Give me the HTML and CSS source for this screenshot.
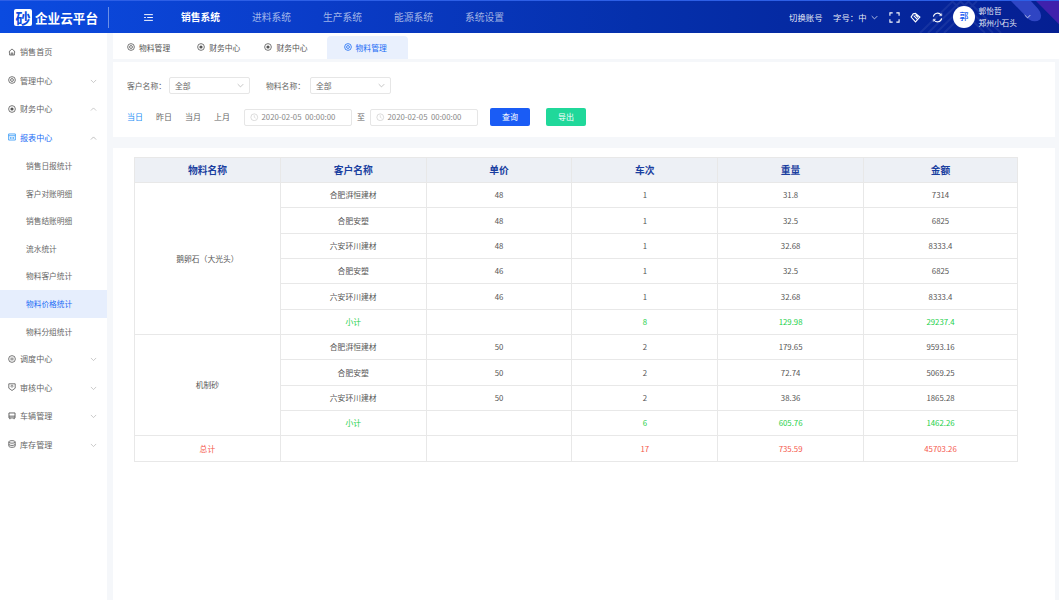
FILE: index.html
```html
<!DOCTYPE html>
<html lang="zh-CN">
<head>
<meta charset="utf-8">
<title>企业云平台</title>
<link rel="stylesheet" href="styles.css">
</head>
<body>
<header class="topbar">
  <svg class="deco" viewBox="0 0 1059 33" preserveAspectRatio="none" aria-hidden="true">
    <path d="M920 33L953 0M928 33L961 0M936 33L969 0M944 33L977 0M952 0L985 33M960 0L993 33M968 0L1001 33" stroke="#fff" stroke-opacity=".07" stroke-width="2" fill="none"/>
    <path d="M1011 0H1031L1038 8Q1043 14 1040 19Q1035 23 1029 19Z" fill="#3a4fd0" fill-opacity=".8"/>
    <path d="M1036 0H1059V24Z" fill="#4a22b0" fill-opacity=".85"/>
  </svg>
  <div class="brand">
    <span class="logo-mark">砂</span>
    <span class="logo-text">企业云平台</span>
  </div>
  <svg class="menu-toggle" viewBox="0 0 10 8" aria-hidden="true"><path d="M0 .7H10M3.5 4H10M0 7.3H10M0 4H2" stroke="#fff" stroke-width="1.1" fill="none"/></svg>
  <nav class="mainnav">
    <a class="on">销售系统</a><a>进料系统</a><a>生产系统</a><a>能源系统</a><a>系统设置</a>
  </nav>
  <div class="tools">
    <span class="tool-text">切换账号</span>
    <span class="tool-text size">字号：中
      <svg class="chev" viewBox="0 0 10 6"><path d="M1 1l4 4 4-4" stroke="#fff" fill="none"/></svg>
    </span>
    <svg class="tool-icon" viewBox="0 0 12 12"><path d="M1 4V1H4M8 1H11V4M11 8V11H8M4 11H1V8" stroke="#fff" stroke-width="1.2" fill="none"/></svg>
    <svg class="tool-icon" viewBox="0 0 12 12"><path d="M6 1.5L10.8 5.5 6 10.8 1.2 5.5 3.5 2ZM4 4L8 8M6 3L9 6" stroke="#fff" stroke-width="1.2" fill="none"/></svg>
    <svg class="tool-icon" viewBox="0 0 12 12"><path d="M1.5 5A4.6 4.6 0 0 1 10 3.5M10.5 7A4.6 4.6 0 0 1 2 8.5" stroke="#fff" stroke-width="1.2" fill="none"/><path d="M10.6 1.5V4H8M1.4 10.5V8H4" stroke="#fff" stroke-width=".8" fill="none"/></svg>
    <span class="avatar">郭</span>
    <span class="user"><span>郭怡哲</span><span>郑州小石头</span></span>
    <svg class="chev user-chev" viewBox="0 0 10 6"><path d="M1 1l4 4 4-4" stroke="#fff" fill="none"/></svg>
  </div>
</header>

<div class="shell">
  <aside class="sidebar">
    <a class="item">
      <svg class="ico" viewBox="0 0 10 10"><path d="M1 4.8L5 1.2 9 4.8M2 4.2V8.8H8V4.2M4 8.8V6.2H6V8.8" fill="none" stroke="currentColor"/></svg>销售首页
    </a>
    <a class="item">
      <svg class="ico" viewBox="0 0 10 10"><circle cx="5" cy="5" r="4.2" fill="none" stroke="currentColor"/><circle cx="5" cy="5" r="1.8" fill="none" stroke="currentColor"/></svg>管理中心
      <svg class="arrow" viewBox="0 0 8 5"><path d="M1 1l3 3 3-3" fill="none" stroke="currentColor" stroke-width=".7"/></svg>
    </a>
    <a class="item">
      <svg class="ico" viewBox="0 0 10 10"><circle cx="5" cy="5" r="4.2" fill="none" stroke="currentColor"/><circle cx="5" cy="5" r="2" fill="currentColor"/></svg>财务中心
      <svg class="arrow" viewBox="0 0 8 5"><path d="M1 4l3-3 3 3" fill="none" stroke="currentColor" stroke-width=".7"/></svg>
    </a>
    <a class="item active">
      <svg class="ico" viewBox="0 0 10 10"><path d="M.8 1.2H9.2V8.8H.8ZM.8 3.4H9.2M3 5V7.4M5 5V7.4M7 5V7.4" fill="none" stroke="currentColor" stroke-width=".9"/></svg>报表中心
      <svg class="arrow" viewBox="0 0 8 5"><path d="M1 4l3-3 3 3" fill="none" stroke="#999" stroke-width=".7"/></svg>
    </a>
    <a class="sub">销售日报统计</a>
    <a class="sub">客户对账明细</a>
    <a class="sub">销售结账明细</a>
    <a class="sub">流水统计</a>
    <a class="sub">物料客户统计</a>
    <a class="sub current">物料价格统计</a>
    <a class="sub">物料分组统计</a>
    <a class="item">
      <svg class="ico" viewBox="0 0 10 10"><circle cx="5" cy="5" r="4.2" fill="none" stroke="currentColor"/><path d="M3 4H7M3 6H7" stroke="currentColor"/></svg>调度中心
      <svg class="arrow" viewBox="0 0 8 5"><path d="M1 1l3 3 3-3" fill="none" stroke="currentColor" stroke-width=".7"/></svg>
    </a>
    <a class="item">
      <svg class="ico" viewBox="0 0 10 10"><path d="M1 1H9V6.5L5 9.4 1 6.5Z" fill="none" stroke="currentColor"/><circle cx="5" cy="4" r="1.3" fill="none" stroke="currentColor" stroke-width=".8"/></svg>审核中心
      <svg class="arrow" viewBox="0 0 8 5"><path d="M1 1l3 3 3-3" fill="none" stroke="currentColor" stroke-width=".7"/></svg>
    </a>
    <a class="item">
      <svg class="ico" viewBox="0 0 10 10"><path d="M1.2 1.2H8.8V7.4H1.2ZM1.2 5.2H8.8M2.4 7.4V9M7.6 7.4V9" fill="none" stroke="currentColor" stroke-width="1.1"/></svg>车辆管理
      <svg class="arrow" viewBox="0 0 8 5"><path d="M1 1l3 3 3-3" fill="none" stroke="currentColor" stroke-width=".7"/></svg>
    </a>
    <a class="item">
      <svg class="ico" viewBox="0 0 10 10"><ellipse cx="5" cy="2.4" rx="4" ry="1.6" fill="none" stroke="currentColor"/><path d="M1 2.4V7.6C1 8.5 2.8 9.2 5 9.2S9 8.5 9 7.6V2.4M1 5.2C1 6.1 2.8 6.8 5 6.8S9 6.1 9 5.2" fill="none" stroke="currentColor"/></svg>库存管理
      <svg class="arrow" viewBox="0 0 8 5"><path d="M1 1l3 3 3-3" fill="none" stroke="currentColor" stroke-width=".7"/></svg>
    </a>
  </aside>

  <main class="content">
    <div class="tabs">
      <a class="tab t1"><svg class="tab-ico" viewBox="0 0 10 10"><circle cx="5" cy="5" r="4.2" fill="none" stroke="currentColor"/><circle cx="5" cy="5" r="1.8" fill="none" stroke="currentColor"/></svg>物料管理</a>
      <a class="tab t2"><svg class="tab-ico" viewBox="0 0 10 10"><circle cx="5" cy="5" r="4.2" fill="none" stroke="currentColor"/><circle cx="5" cy="5" r="2" fill="currentColor"/></svg>财务中心</a>
      <a class="tab t3"><svg class="tab-ico" viewBox="0 0 10 10"><circle cx="5" cy="5" r="4.2" fill="none" stroke="currentColor"/><circle cx="5" cy="5" r="2" fill="currentColor"/></svg>财务中心</a>
      <a class="tab selected"><svg class="tab-ico" viewBox="0 0 10 10"><circle cx="5" cy="5" r="4.2" fill="none" stroke="currentColor"/><circle cx="5" cy="5" r="1.8" fill="none" stroke="currentColor"/></svg>物料管理</a>
    </div>

    <section class="filters">
      <div class="filter-row">
        <label class="flabel">客户名称：</label>
        <div class="select">全部<svg viewBox="0 0 10 6"><path d="M1 1l4 4 4-4" fill="none" stroke="#999" stroke-width=".8"/></svg></div>
        <label class="flabel second">物料名称：</label>
        <div class="select">全部<svg viewBox="0 0 10 6"><path d="M1 1l4 4 4-4" fill="none" stroke="#999" stroke-width=".8"/></svg></div>
      </div>
      <div class="filter-row lower">
        <a class="quick on">当日</a><a class="quick">昨日</a><a class="quick">当月</a><a class="quick">上月</a>
        <div class="date"><svg viewBox="0 0 10 10"><circle cx="5" cy="5" r="4" fill="none" stroke="#ccc" stroke-width=".8"/><path d="M5 2.6V5L6.6 6" fill="none" stroke="#ccc" stroke-width=".7"/></svg><span>2020-02-05&nbsp;&nbsp;00:00:00</span></div>
        <span class="to">至</span>
        <div class="date"><svg viewBox="0 0 10 10"><circle cx="5" cy="5" r="4" fill="none" stroke="#ccc" stroke-width=".8"/><path d="M5 2.6V5L6.6 6" fill="none" stroke="#ccc" stroke-width=".7"/></svg><span>2020-02-05&nbsp;&nbsp;00:00:00</span></div>
        <button class="btn query">查询</button>
        <button class="btn export">导出</button>
      </div>
    </section>

    <section class="panel">
      <table class="grid">
        <colgroup><col class="c1"><col class="c2"><col class="c3"><col class="c4"><col class="c5"><col class="c6"></colgroup>
        <thead><tr><th>物料名称</th><th>客户名称</th><th>单价</th><th>车次</th><th>重量</th><th>金额</th></tr></thead>
        <tbody>
          <tr><td rowspan="6">鹅卵石（大光头）</td><td>合肥湃恒建材</td><td>48</td><td>1</td><td>31.8</td><td>7314</td></tr>
          <tr><td>合肥安塑</td><td>48</td><td>1</td><td>32.5</td><td>6825</td></tr>
          <tr><td>六安环川建材</td><td>48</td><td>1</td><td>32.68</td><td>8333.4</td></tr>
          <tr><td>合肥安塑</td><td>46</td><td>1</td><td>32.5</td><td>6825</td></tr>
          <tr><td>六安环川建材</td><td>46</td><td>1</td><td>32.68</td><td>8333.4</td></tr>
          <tr class="subtotal"><td>小计</td><td></td><td>8</td><td>129.98</td><td>29237.4</td></tr>
          <tr><td rowspan="4">机制砂</td><td>合肥湃恒建材</td><td>50</td><td>2</td><td>179.65</td><td>9593.16</td></tr>
          <tr><td>合肥安塑</td><td>50</td><td>2</td><td>72.74</td><td>5069.25</td></tr>
          <tr><td>六安环川建材</td><td>50</td><td>2</td><td>38.36</td><td>1865.28</td></tr>
          <tr class="subtotal"><td>小计</td><td></td><td>6</td><td>605.76</td><td>1462.26</td></tr>
          <tr class="total"><td>总计</td><td></td><td></td><td>17</td><td>735.59</td><td>45703.26</td></tr>
        </tbody>
      </table>
    </section>
  </main>
</div>
</body>
</html>
```

FILE: styles.css
```css
* { box-sizing: border-box; }
html, body { margin: 0; height: 100%; overflow: hidden; }
body {
  font-family: "Noto Sans CJK SC", "Noto Sans", sans-serif;
  font-size: 8px;
  color: #555;
  background: #f5f7fa;
}
a { display: block; }

.topbar {
  position: relative;
  height: 33px;
  display: flex;
  align-items: center;
  color: #fff;
  background: linear-gradient(90deg, #0b4be0 0%, #0a3cc8 30%, #0530ac 60%, #051f92 100%);
  border-top: 1px solid #2d5fe6;
  overflow: hidden;
}
.deco { position: absolute; inset: 0; width: 100%; height: 100%; }
.brand {
  position: relative;
  width: 109px;
  height: 21px;
  display: flex;
  align-items: center;
  padding-left: 14px;
  border-right: 1px solid rgba(255,255,255,.4);
  flex: none;
}
.logo-mark {
  width: 18px; height: 17px;
  background: #fff; color: #0b4be0;
  border-radius: 2px;
  font-size: 15px; line-height: 17px; font-weight: 700;
  text-align: center;
  margin-right: 3px;
}
.logo-text { font-size: 12.6px; font-weight: 700; white-space: nowrap; }
.menu-toggle { position: relative; width: 9px; height: 7px; margin-left: 35px; flex: none; }
.mainnav {
  position: relative;
  display: flex;
  gap: 32px;
  margin-left: 28px;
  font-size: 9.75px;
  color: rgba(255,255,255,.62);
}
.mainnav a { white-space: nowrap; }
.mainnav .on { color: #fff; font-weight: 700; }
.tools {
  position: relative;
  margin-left: auto;
  display: flex;
  align-items: center;
  font-size: 8.4px;
}
.tool-text { white-space: nowrap; margin-right: 10.5px; color: rgba(255,255,255,.92); }
.size { display: flex; align-items: center; margin-right: 11px; }
.chev { width: 7px; height: 5px; margin-left: 4px; flex: none; }
.tool-icon { width: 11px; height: 11px; margin-right: 10.5px; flex: none; }
.avatar {
  width: 22px; height: 22px;
  border-radius: 50%;
  background: #fff;
  color: #1a5cf0;
  font-size: 9px;
  font-weight: 500;
  line-height: 22px;
  text-align: center;
  margin-right: 3.5px;
  flex: none;
}
.user { display: flex; flex-direction: column; font-size: 7.7px; line-height: 12.5px; white-space: nowrap; color: rgba(255,255,255,.92); }
.tools .user-chev { margin-left: 7px; margin-right: 28px; margin-top: -2px; }

.shell { display: flex; height: 567px; }
.sidebar {
  width: 107px;
  flex: none;
  background: #fff;
  padding-top: 5px;
  font-size: 8.1px;
  color: #666;
}
.item {
  position: relative;
  height: 28.5px;
  display: flex;
  align-items: center;
  padding-left: 8px;
  padding-bottom: 1px;
  white-space: nowrap;
}
.ico { width: 8px; height: 8px; margin-right: 4px; flex: none; color: #555; }
.arrow { position: absolute; right: 10px; top: 12px; width: 7px; height: 4.5px; color: #aaa; }
.item.active { color: #1a6cf5; }
.item.active .ico { color: #1a8cf5; }
.sub {
  height: 27.6px;
  line-height: 27.6px;
  padding-left: 26px;
  white-space: nowrap;
  font-size: 7.7px;
  color: #666;
}
.sub.current { background: #e6eefd; color: #1a6cf5; }

.content { flex: 1; min-width: 0; padding-left: 6px; display: flex; flex-direction: column; }
.tabs {
  height: 26px;
  background: #fff;
  padding-left: 6px;
  display: flex;
  align-items: flex-end;
  flex: none;
}
.tab {
  height: 23px;
  display: flex;
  align-items: center;
  font-size: 7.8px;
  color: #555;
  white-space: nowrap;
  padding-bottom: 1px;
}
.tab-ico { width: 8px; height: 8px; margin-right: 4px; flex: none; }
.t1 { margin-left: 8px; }
.t2 { margin-left: 27px; }
.t3 { margin-left: 24px; }
.selected {
  margin-left: 19px;
  width: 81px;
  padding-left: 17px;
  background: #e9f0fd;
  border-radius: 4px 4px 0 0;
  color: #1a6cf5;
}
.filters {
  height: 75px;
  margin-top: 3px;
  margin-right: 4px;
  background: #fff;
  padding: 15px 14px 0;
  flex: none;
}
.filter-row { display: flex; align-items: center; height: 17px; }
.filter-row.lower { margin-top: 14px; height: 18px; }
.flabel { width: 42px; white-space: nowrap; color: #666; font-size: 7.8px; padding-bottom: 1px; }
.flabel.second { margin-left: 16px; width: 44px; }
.select {
  width: 81px; height: 17px;
  border: 1px solid #e6e6e6;
  border-radius: 2px;
  padding: 0 5px 1px;
  display: flex;
  align-items: center;
  justify-content: space-between;
  color: #666;
  font-size: 7.8px;
}
.select svg { width: 7px; height: 5px; margin-top: 1px; }
.quick { width: 29px; color: #666; white-space: nowrap; padding-bottom: 1px; }
.quick.on { color: #1a8cf5; }
.date {
  width: 108px; height: 17px;
  border: 1px solid #e6e6e6;
  border-radius: 2px;
  display: flex;
  align-items: center;
  padding-left: 5px;
  padding-bottom: 1px;
  color: #888;
  font-size: 7.8px;
  white-space: nowrap;
}
.date svg { width: 8.5px; height: 8.5px; margin-right: 3px; margin-top: 1px; flex: none; }
.quick + .date { margin-left: 1px; }
.to { width: 18px; text-align: center; color: #666; padding-bottom: 1px; }
.btn {
  height: 18px;
  width: 40px;
  border: 0;
  border-radius: 2px;
  color: #fff;
  font: inherit;
  font-size: 8px;
  padding: 0 0 1px;
}
.query { background: #1a5cf5; margin-left: 12px; }
.export { background: #20d89a; margin-left: 16px; }

.panel {
  flex: 1;
  margin-top: 11px;
  margin-right: 4px;
  background: #fff;
  padding: 9px 0 0 21px;
}
.grid {
  table-layout: fixed;
  border-collapse: collapse;
  width: 883px;
  text-align: center;
}
.c1, .c2, .c3, .c4, .c5 { width: 145.8px; }
.c6 { width: 154px; }
.grid th, .grid td { border: 1px solid #e8e8e8; padding: 0; font-weight: 400; }
.grid th {
  height: 25px;
  background: #edf0f5;
  color: #1a3fa0;
  font-size: 9.75px;
  font-weight: 700;
}
.grid td { height: 25.35px; color: #555; font-size: 7.8px; padding-bottom: 1px; }
.subtotal td { color: #22d04a; }
.total td { color: #f5574b; }
```
